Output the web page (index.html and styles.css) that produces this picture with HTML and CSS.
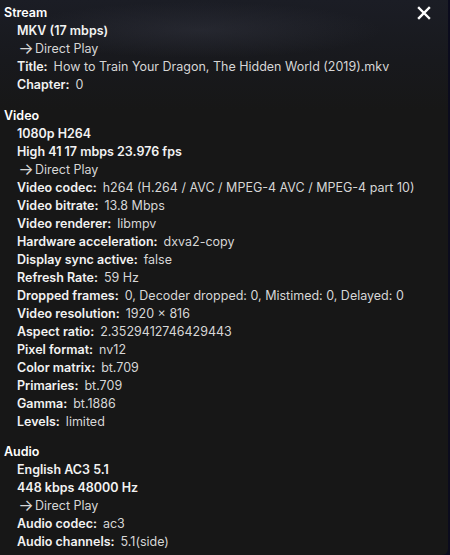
FILE: index.html
```html
<!DOCTYPE html>
<html>
<head>
<meta charset="utf-8">
<link rel="stylesheet" href="styles.css">
</head>
<body>
<div class="panel">
  <button class="close" aria-label="Close">
    <svg width="14" height="14" viewBox="0 0 14 14"><path d="M2 2 L12 12 M12 2 L2 12" stroke="#fff" stroke-width="2.4" stroke-linecap="square"/></svg>
  </button>
  <section class="group">
    <div class="heading">Stream</div>
    <div class="item strong">MKV (17 mbps)</div>
    <div class="item value arrow"><span class="arrow-glyph">→</span>Direct Play</div>
    <div class="item"><span class="label">Title:</span><span class="value">How to Train Your Dragon, The Hidden World (2019).mkv</span></div>
    <div class="item"><span class="label">Chapter:</span><span class="value">0</span></div>
  </section>
  <section class="group">
    <div class="heading">Video</div>
    <div class="item strong">1080p H264</div>
    <div class="item strong">High 41 17 mbps 23.976 fps</div>
    <div class="item value arrow"><span class="arrow-glyph">→</span>Direct Play</div>
    <div class="item"><span class="label">Video codec:</span><span class="value">h264 (H.264 / AVC / MPEG-4 AVC / MPEG-4 part 10)</span></div>
    <div class="item"><span class="label">Video bitrate:</span><span class="value">13.8 Mbps</span></div>
    <div class="item"><span class="label">Video renderer:</span><span class="value">libmpv</span></div>
    <div class="item"><span class="label">Hardware acceleration:</span><span class="value">dxva2-copy</span></div>
    <div class="item"><span class="label">Display sync active:</span><span class="value">false</span></div>
    <div class="item"><span class="label">Refresh Rate:</span><span class="value">59 Hz</span></div>
    <div class="item"><span class="label">Dropped frames:</span><span class="value">0, Decoder dropped: 0, Mistimed: 0, Delayed: 0</span></div>
    <div class="item"><span class="label">Video resolution:</span><span class="value">1920 × 816</span></div>
    <div class="item"><span class="label">Aspect ratio:</span><span class="value">2.3529412746429443</span></div>
    <div class="item"><span class="label">Pixel format:</span><span class="value">nv12</span></div>
    <div class="item"><span class="label">Color matrix:</span><span class="value">bt.709</span></div>
    <div class="item"><span class="label">Primaries:</span><span class="value">bt.709</span></div>
    <div class="item"><span class="label">Gamma:</span><span class="value">bt.1886</span></div>
    <div class="item"><span class="label">Levels:</span><span class="value">limited</span></div>
  </section>
  <section class="group">
    <div class="heading">Audio</div>
    <div class="item strong">English AC3 5.1</div>
    <div class="item strong">448 kbps 48000 Hz</div>
    <div class="item value arrow"><span class="arrow-glyph">→</span>Direct Play</div>
    <div class="item"><span class="label">Audio codec:</span><span class="value">ac3</span></div>
    <div class="item"><span class="label">Audio channels:</span><span class="value">5.1(side)</span></div>
  </section>
</div>
</body>
</html>
```
FILE: styles.css
```css
html, body {
  margin: 0;
  padding: 0;
  height: 100%;
  background: #0b0b1d;
  overflow: hidden;
}
.panel {
  position: relative;
  width: 448px;
  height: 555px;
  box-sizing: border-box;
  padding: 4px 0 0 4px;
  background:
    radial-gradient(ellipse 260px 40px at 200px 30px, rgba(60,62,75,0.35), rgba(0,0,0,0) 70%),
    linear-gradient(180deg, #1b1d25 0px, #18191d 60px, #171717 110px, #171717 100%);
  border-bottom-right-radius: 6px;
  font-family: Inter, "Noto Sans", sans-serif;
  font-size: 12.5px;
  line-height: 18px;
  color: #fff;
}
.close {
  position: absolute;
  top: 6px;
  right: 17px;
  width: 14px;
  height: 14px;
  padding: 0;
  border: 0;
  background: none;
  display: flex;
}
.group {
  margin-bottom: 13px;
}
.group:nth-child(3) {
  margin-bottom: 12px;
}
.heading {
  font-weight: 600;
  color: #fff;
}
.item {
  padding-left: 13px;
}
.arrow {
  padding-left: 16px;
}
.arrow-glyph {
  display: inline-block;
  transform: scale(1.3);
  margin-right: 3px;
}
.strong {
  font-weight: 600;
  color: #f2f2f2;
}
.label {
  font-weight: 600;
  color: #f2f2f2;
  margin-right: 6px;
}
.value {
  color: #d6d6d6;
  font-weight: 400;
}
```
